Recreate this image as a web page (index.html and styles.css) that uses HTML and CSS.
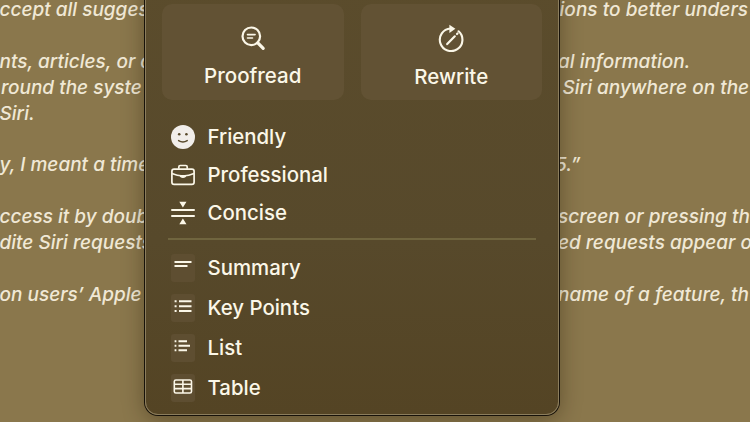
FILE: index.html
```html
<!DOCTYPE html>
<html lang="en">
<head>
  <meta charset="UTF-8" />
  <meta name="viewport" content="width=device-width, initial-scale=1.0"/>
  <title>Writing Tools</title>
  <link rel="stylesheet" href="styles.css">
</head>
<body>

  <main class="document">
    <div class="before">
      <p>ccept all sugges</p>
      <p></p>
      <p>nts, articles, or c</p>
      <p class="nudge">round the syste</p>
      <p>Siri.</p>
      <p></p>
      <p>y, I meant a time</p>
      <p></p>
      <p>ccess it by doub</p>
      <p>dite Siri requests</p>
      <p></p>
      <p>on users’ Apple</p>
    </div>
    <div class="after">
      <p class="nudge wide">ions to better unders</p>
      <p></p>
      <p>al information.</p>
      <p class="indent">Siri anywhere on the</p>
      <p></p>
      <p></p>
      <p class="quote">5.”</p>
      <p></p>
      <p>screen or pressing th</p>
      <p>ed requests appear o</p>
      <p></p>
      <p>name of a feature, th</p>
    </div>
  </main>

  <div class="panel">
    <div class="actions">
      <button type="button" class="action">
        <svg width="28" height="28" viewBox="0 0 28 28" fill="none" stroke="currentColor" stroke-linecap="round">
          <circle cx="12.3" cy="12.3" r="8.8" stroke-width="2.2"/>
          <path d="M18.8 18.8l5.4 5.6" stroke-width="3.2"/>
          <path d="M8.5 10.6h7.6M8.5 14h5" stroke-width="1.6"/>
        </svg>
        <span>Proofread</span>
      </button>
      <button type="button" class="action rewrite">
        <svg width="28" height="28" viewBox="0 0 28 28" fill="none" stroke="currentColor" stroke-linecap="round">
          <path d="M21.6 7.3A11.3 11.3 0 1 1 13.5 4.5" stroke-width="2.1"/>
          <path d="M12.4 .7l6 4-6 4.2z" fill="currentColor" stroke="none"/>
          <path d="M10.2 20.1l7.6-7.8M20 10l.5-.5" stroke-width="2.2"/>
        </svg>
        <span>Rewrite</span>
      </button>
    </div>

    <ul class="tones">
      <li>
        <svg width="24" height="24" viewBox="0 0 24 24" fill="none">
          <circle class="head" cx="12" cy="12" r="12"/>
          <circle class="face" cx="8.2" cy="9.2" r="1.3"/>
          <circle class="face" cx="15.4" cy="9.2" r="1.3"/>
          <path class="smile" d="M7.6 15.6q4.3 2.7 8.6 0"/>
        </svg>
        <span>Friendly</span>
      </li>
      <li>
        <svg width="24" height="24" viewBox="0 0 24 24" fill="none" stroke="currentColor" stroke-width="1.7">
          <rect x=".9" y="6.1" width="22.2" height="15.3" rx="2.2"/>
          <path d="M7.8 5.7V3.9q0-1.4 1.4-1.4h5.6q1.4 0 1.4 1.4v1.8"/>
          <path d="M1 10.5q5 2.4 11 2.4t11-2.4" stroke-width="1.5"/>
          <path d="M8.8 12.1h6.4v1q0 1.8-3.2 1.8t-3.2-1.8z" fill="currentColor" stroke="none"/>
        </svg>
        <span>Professional</span>
      </li>
      <li>
        <svg width="24" height="24" viewBox="0 0 24 24" fill="currentColor">
          <rect y="8" width="24" height="2" rx="1"/>
          <rect y="14" width="24" height="2" rx="1"/>
          <path d="M8.3 .8h7.2L11.9 6.6zM8.3 23.2h7.2l-3.6-5.8z"/>
        </svg>
        <span>Concise</span>
      </li>
    </ul>

    <hr>

    <ul class="formats">
      <li>
        <svg class="tile" width="24" height="28" viewBox="0 0 24 28" stroke="currentColor" stroke-width="2">
          <path d="M3.5 8h17M3.5 12h13"/>
        </svg>
        <span>Summary</span>
      </li>
      <li>
        <svg class="tile" width="24" height="28" viewBox="0 0 24 28" stroke="currentColor" stroke-width="2">
          <path d="M8 7.3h12.5M8 12.2h12.5M8 17.1h12.5M3.6 7.3h2M3.6 12.2h2M3.6 17.1h2"/>
        </svg>
        <span>Key Points</span>
      </li>
      <li>
        <svg class="tile" width="24" height="28" viewBox="0 0 24 28" stroke="currentColor" stroke-width="2">
          <path d="M7.5 7.3h8.5M7.5 11.8h11.5M7.5 16.3h8.5M3.6 7.3h1.8M3.6 11.8h1.8M3.6 16.3h1.8"/>
        </svg>
        <span>List</span>
      </li>
      <li>
        <svg class="tile" width="24" height="28" viewBox="0 0 24 28" fill="none" stroke="currentColor" stroke-width="1.6">
          <rect x="3.3" y="6" width="17.2" height="13" rx="1.6"/>
          <path d="M3.3 10.2h17.2M3.3 14.6h17.2M11.9 6v13"/>
        </svg>
        <span>Table</span>
      </li>
    </ul>
  </div>

</body>
</html>
```
FILE: styles.css
```css
:root {
  --paper: #8a774c;
  --panel: #58492a;
  --text: #fbf7e8;
  --doc-text: #f0e8d5;
}

* {
  box-sizing: border-box;
  margin: 0;
  padding: 0;
}

body {
  width: 750px;
  height: 422px;
  overflow: hidden;
  background-color: var(--paper);
  color: var(--text);
  font-family: Inter, "Liberation Sans", sans-serif;
}

.document {
  display: grid;
  grid-template-columns: 145px 1fr;
  column-gap: 413px;
  margin-top: -3px;
  color: var(--doc-text);
  font-size: 19px;
  font-style: italic;
  font-weight: 500;
  line-height: 25.9px;
  white-space: nowrap;
}

.document p {
  height: 25.9px;
}

.before {
  text-indent: -0.5px;
}

.document .nudge {
  padding-left: 1.5px;
}

.after .wide {
  letter-spacing: 0.05px;
}

.after .indent {
  padding-left: 4.5px;
}

.after .quote {
  text-indent: -3px;
}

/* the menu floats over the document */
.panel {
  position: absolute;
  top: -20px;
  left: 145px;
  width: 414px;
  height: 435px;
  padding: 23px 16px 0;
  background: linear-gradient(#5b4c2c, #57492b 60%, #544424);
  border: 1px solid #8b7d5d;
  border-radius: 13px;
  box-shadow: 0 0 0 1px #17120a, 0 4px 22px rgba(30, 20, 0, 0.4);
}

.actions {
  display: grid;
  grid-template-columns: 1fr 1fr;
  gap: 17px;
}

.action {
  display: flex;
  flex-direction: column;
  align-items: center;
  height: 96px;
  padding-top: 20px;
  border: none;
  border-radius: 10px;
  background-color: #625234;
  color: inherit;
  font: inherit;
  font-size: 20.5px;
  font-weight: 450;
  line-height: 24px;
}

.action span {
  margin-top: 12px;
}

.rewrite span {
  margin-top: 13px;
}

ul {
  list-style: none;
  padding-left: 8.5px;
  font-size: 20.4px;
  font-weight: 450;
}

li {
  display: flex;
  align-items: center;
  gap: 13px;
}

li span {
  padding-bottom: 2px;
}

.tones {
  margin-top: 18px;
}

.tones li {
  height: 38px;
}

.head {
  fill: #f1eeea;
}

.face {
  fill: var(--panel);
}

.smile {
  stroke: var(--panel);
  stroke-width: 1.5;
  stroke-linecap: round;
}

hr {
  height: 2px;
  margin: 6px 6px 8px;
  border: none;
  background-color: #70653f;
}

.formats li {
  height: 40px;
}

.tile {
  border-radius: 3px;
  background-color: #5e4e31;
}
```
